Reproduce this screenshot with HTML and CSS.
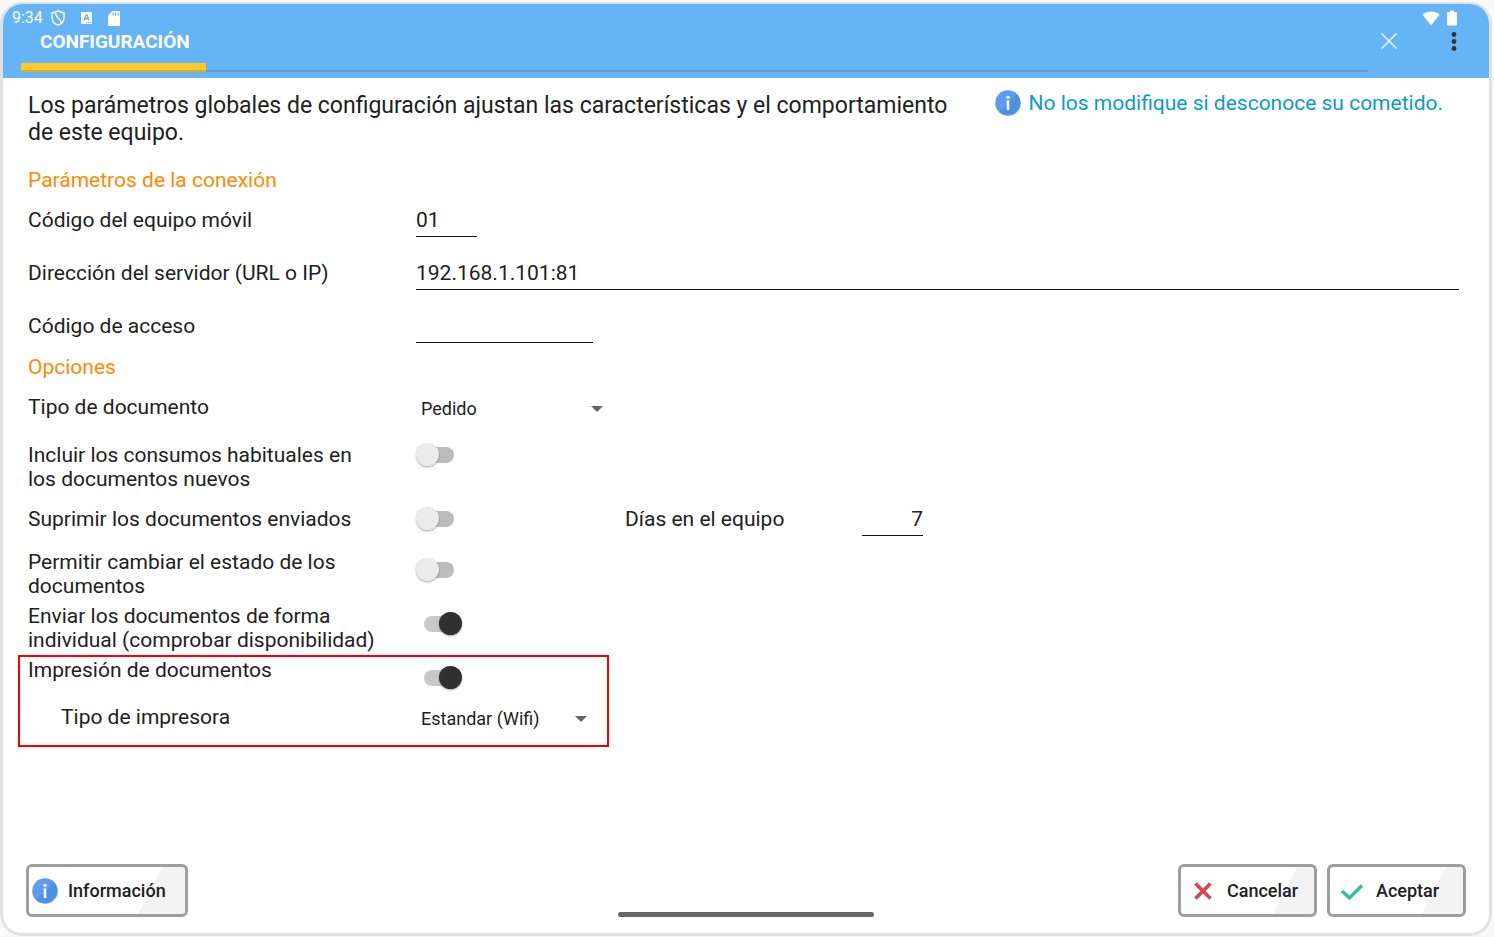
FILE: index.html
```
<!DOCTYPE html>
<html lang="es">
<head>
    <meta charset="UTF-8">
    <meta name="viewport" content="width=device-width, initial-scale=1.0">
    <title>Configuración</title>
    <link rel="stylesheet" href="styles.css">
</head>
<body>
    <div class="device">
        <header>
            <div class="statusbar">
                <span class="clock">9:34</span>
                <svg class="shield" width="14" height="16" viewBox="0 0 14 16" fill="none" stroke="#fff" stroke-width="1.4">
                    <path d="M7 1 L13 3 V7.5 C13 11 10.5 14 7 15.2 C3.5 14 1 11 1 7.5 V3 Z"/>
                    <path d="M4.500 2.500 C4.500 8.500 10 7.500 10 13"/>
                </svg>
                <svg class="letter" width="11" height="12" viewBox="0 0 11 12">
                    <rect width="11" height="12" rx="1" fill="#fff"/>
                    <path d="M3 8.5 L5 3 H6 L8 8.5 M3.8 6.8 H7.2" fill="none" stroke="#64b4f6" stroke-width="1.4"/>
                    <path d="M5 10.5 H6 M7 10.5 H8 M9 10.5 H10" stroke="#64b4f6"/>
                </svg>
                <svg class="sdcard" width="12" height="15" viewBox="0 0 12 15">
                    <path d="M4.500 0 H11 A1 1 0 0 1 12 1 V14 A1 1 0 0 1 11 15 H1 A1 1 0 0 1 0 14 V4.500 Z" fill="#fff"/>
                    <path d="M5 1.500 V4.500 M7.500 1.500 V4.500 M10 1.500 V4.500" stroke="#64b4f6" stroke-width="1.300"/>
                </svg>
                <svg class="wifi" width="18" height="15" viewBox="0 0 18 15">
                    <path d="M0.500 3.800 C5 -0.500 13 -0.500 17.500 3.800 L9 14.500 Z" fill="#fff"/>
                </svg>
                <svg width="10" height="16" viewBox="0 0 10 16">
                    <path d="M3 0.500 H7 V2 H9 A1 1 0 0 1 10 3 V14.500 A1 1 0 0 1 9 15.500 H1 A1 1 0 0 1 0 14.500 V3 A1 1 0 0 1 1 2 H3 Z" fill="#fff"/>
                </svg>
            </div>
            <div class="toolbar">
                <nav class="tabs">
                    <a href="#" class="tab">CONFIGURACIÓN</a>
                </nav>
                <button type="button" class="icon-button" aria-label="Cerrar">
                    <svg width="24" height="20" viewBox="0 0 24 20" stroke="#e8f4fe" stroke-width="1.5">
                        <path d="M4.500 1.500 L19.500 16.500 M19.500 1.500 L4.500 16.500"/>
                    </svg>
                </button>
                <button type="button" class="icon-button menu" aria-label="Menú">
                    <svg width="24" height="20" viewBox="0 0 24 20" fill="#333">
                        <circle cx="12" cy="2.500" r="2.400"/>
                        <circle cx="12" cy="9.500" r="2.400"/>
                        <circle cx="12" cy="16.500" r="2.400"/>
                    </svg>
                </button>
            </div>
        </header>

        <form id="config">
            <main>
                <div class="intro">
                    <p class="intro-text">Los parámetros globales de configuración ajustan las características y el comportamiento de este equipo.</p>
                    <p class="note">
                        <svg width="26" height="26" viewBox="0 0 26 26">
                            <circle cx="13" cy="13" r="12.800" fill="#5d9cec"/>
                            <path d="M22 4 A12.800 12.800 0 0 1 4 22 Z" fill="#4f8fdf"/>
                            <path d="M13 10.500 V20" stroke="#fff" stroke-width="2.600"/>
                            <circle cx="13" cy="7.300" r="1.600" fill="#fff"/>
                        </svg>
                        <span>No los modifique si desconoce su cometido.</span>
                    </p>
                </div>

                <h2>Parámetros de la conexión</h2>
                <div class="row field">
                    <label for="codigo">Código del equipo móvil</label>
                    <input type="text" id="codigo" class="short" value="01">
                </div>
                <div class="row field">
                    <label for="servidor">Dirección del servidor (URL o IP)</label>
                    <input type="text" id="servidor" value="192.168.1.101:81">
                </div>
                <div class="row field">
                    <label for="acceso">Código de acceso</label>
                    <input type="text" id="acceso" class="medium">
                </div>

                <h2>Opciones</h2>
                <div class="row field">
                    <label for="tipoDocumento">Tipo de documento</label>
                    <div class="select document-type">
                        <select id="tipoDocumento">
                            <option>Pedido</option>
                        </select>
                    </div>
                </div>
                <div class="row usual">
                    <label for="consumos">Incluir los consumos habituales en los documentos nuevos</label>
                    <input type="checkbox" id="consumos" class="switch">
                </div>
                <div class="row sent">
                    <label for="suprimir">Suprimir los documentos enviados</label>
                    <input type="checkbox" id="suprimir" class="switch">
                    <label for="dias" class="days-label">Días en el equipo</label>
                    <input type="text" id="dias" class="short days" value="7">
                </div>
                <div class="row status">
                    <label for="estado">Permitir cambiar el estado de los documentos</label>
                    <input type="checkbox" id="estado" class="switch low">
                </div>
                <div class="row single">
                    <label for="individual">Enviar los documentos de forma individual (comprobar disponibilidad)</label>
                    <input type="checkbox" id="individual" class="switch low" checked>
                </div>
                <div class="highlight">
                    <div class="row">
                        <label for="impresion">Impresión de documentos</label>
                        <input type="checkbox" id="impresion" class="switch low" checked>
                    </div>
                    <div class="row printer">
                        <label for="tipoImpresora" class="indent">Tipo de impresora</label>
                        <div class="select printer-type">
                            <select id="tipoImpresora">
                                <option>Estandar (Wifi)</option>
                            </select>
                        </div>
                    </div>
                </div>
            </main>

            <footer>
                <button type="button" class="action info">
                    <svg width="26" height="26" viewBox="0 0 26 26">
                        <circle cx="13" cy="13" r="12.800" fill="#5d9cec"/>
                        <path d="M22 4 A12.800 12.800 0 0 1 4 22 Z" fill="#4f8fdf"/>
                        <path d="M13 10.500 V20" stroke="#fff" stroke-width="2.600"/>
                        <circle cx="13" cy="7.300" r="1.600" fill="#fff"/>
                    </svg>
                    <span>Información</span>
                </button>
                <button type="reset" class="action">
                    <svg width="24" height="24" viewBox="0 0 24 24" stroke="#da4453" stroke-width="3.600">
                        <path d="M4.500 4.500 L19.500 19.500 M19.500 4.500 L4.500 19.500"/>
                    </svg>
                    <span>Cancelar</span>
                </button>
                <button type="submit" class="action">
                    <svg width="24" height="24" viewBox="0 0 24 24" fill="none" stroke="#37bc9b" stroke-width="3.400">
                        <path d="M2 12 L9.500 19 L22 6.500"/>
                    </svg>
                    <span>Aceptar</span>
                </button>
            </footer>
        </form>
        <div class="home-bar"></div>
    </div>
</body>
</html>
```
FILE: styles.css
```
* {
    box-sizing: border-box;
}
body {
    margin: 0;
    padding: 2px 2px 1px 0;
    min-height: 100vh;
    display: flex;
    background-color: #f9f9f9;
    font-family: Roboto, sans-serif;
    font-size: 21px;
    line-height: 24px;
    color: #212121;
}
.device {
    position: relative;
    flex: 1;
    display: flex;
    flex-direction: column;
    border: 3px solid #e1e1e1;
    border-top-width: 2px;
    border-radius: 22px;
    overflow: hidden;
    background-color: #fff;
}
header {
    height: 74px;
    background-color: #64b4f6;
    color: #fff;
}
.statusbar {
    display: flex;
    align-items: center;
    height: 28px;
    padding: 0 32px 0 9px;
    font-size: 16px;
}
.shield {
    margin-left: 8px;
}
.letter {
    margin-left: 16px;
}
.sdcard {
    margin-left: 16px;
}
.wifi {
    margin-left: auto;
    margin-right: 7px;
}
.toolbar {
    display: flex;
    align-items: flex-start;
    padding: 0 23px 0 18px;
}
.tabs {
    flex: 1;
    display: flex;
    height: 40px;
    margin-right: 9px;
    box-shadow: inset 0 -2px #5a9dd5;
}
.tab {
    min-width: 185px;
    padding: 0 10px 0 19px;
    background: linear-gradient(to top, #dcae28 2px, #ffc928 2px) bottom / 100% 9px no-repeat;
    font-size: 19px;
    line-height: 20px;
    font-weight: bold;
    color: #fff;
    text-decoration: none;
}
.icon-button {
    width: 24px;
    height: 20px;
    padding: 0;
    border: none;
    background: none;
    cursor: pointer;
}
.icon-button svg, .action svg {
    display: block;
}
.menu {
    margin-left: 41px;
}
form {
    flex: 1;
    display: flex;
    flex-direction: column;
}
main {
    flex: 1;
    padding: 14px 30px 0 25px;
}
.intro {
    display: flex;
    justify-content: space-between;
    gap: 32px;
    margin-bottom: 20px;
}
.intro p {
    margin: 0;
}
.intro-text {
    font-size: 23px;
    line-height: 27px;
}
.note {
    flex: none;
    display: flex;
    align-items: center;
    gap: 8px;
    height: 22px;
    padding-right: 16px;
    color: #0a9bcb;
}
h2 {
    margin: 0;
    font-size: 21px;
    line-height: 28px;
    font-weight: normal;
    color: #ff8a00;
}
.row {
    display: flex;
    align-items: flex-start;
}
.row label {
    width: 388px;
    padding-right: 36px;
}
.field {
    height: 53px;
    padding-top: 14px;
}
input[type="text"] {
    flex: 1;
    height: 29px;
    padding: 0 0 4px;
    border: none;
    border-bottom: 1px solid #111;
    border-radius: 0;
    background: none;
    font: inherit;
    color: inherit;
    outline: none;
}
input.short {
    flex: none;
    width: 61px;
}
input.medium {
    flex: none;
    width: 177px;
}
.select {
    position: relative;
}
.select::after {
    content: "";
    position: absolute;
    top: 11px;
    right: 0;
    border: 6px solid transparent;
    border-top-color: #666;
    border-bottom: none;
    pointer-events: none;
}
.document-type {
    width: 187px;
}
.printer-type {
    width: 171px;
}
select {
    display: block;
    width: 100%;
    height: 27px;
    padding: 0 20px 0 5px;
    border: none;
    appearance: none;
    background: none;
    font: inherit;
    font-size: 18px;
    color: inherit;
}
.switch {
    appearance: none;
    position: relative;
    width: 47px;
    height: 24px;
    margin: 0;
    cursor: pointer;
}
.switch::before {
    content: "";
    position: absolute;
    top: 4px;
    left: 8px;
    width: 30px;
    height: 16px;
    border-radius: 8px;
    background-color: #bcbcbc;
}
.switch::after {
    content: "";
    position: absolute;
    top: 0;
    left: 0;
    width: 23px;
    height: 23px;
    border-radius: 50%;
    background-color: #ebebeb;
    box-shadow: 0 1px 2px rgba(0, 0, 0, 0.35);
}
.switch:checked::before {
    background-color: #c9c9c9;
}
.switch:checked::after {
    left: 23px;
    background-color: #303030;
}
.low {
    margin-top: 8px;
}
.usual {
    margin-top: 9px;
}
.sent {
    height: 24px;
    margin-top: 16px;
}
.row .days-label {
    width: 237px;
    margin-left: 162px;
}
.days {
    text-align: right;
}
.status {
    margin-top: 19px;
}
.single {
    margin-top: 6px;
}
.highlight {
    width: 591px;
    margin: 3px 0 0 -10px;
    padding: 1px 0 13px 8px;
    border: 2px solid #f60000;
}
.printer {
    margin-top: 15px;
}
.row .indent {
    padding-left: 33px;
}
footer {
    display: flex;
    gap: 10px;
    padding: 20px 23px 16px;
}
.action {
    display: flex;
    align-items: center;
    gap: 12px;
    width: 139px;
    height: 53px;
    padding: 0 10px;
    border: 3px solid #9e9e9e;
    border-radius: 6px;
    background: linear-gradient(117deg, #fff 74%, #f3f3f3 74%);
    font: inherit;
    font-size: 18px;
    font-weight: 500;
    color: #212121;
    cursor: pointer;
}
.info {
    gap: 10px;
    width: 162px;
    padding: 0 3px;
    margin-right: auto;
}
.home-bar {
    position: absolute;
    left: 50%;
    bottom: 16px;
    width: 256px;
    height: 5px;
    margin-left: -128px;
    border-radius: 3px;
    background-color: #666;
}
```
